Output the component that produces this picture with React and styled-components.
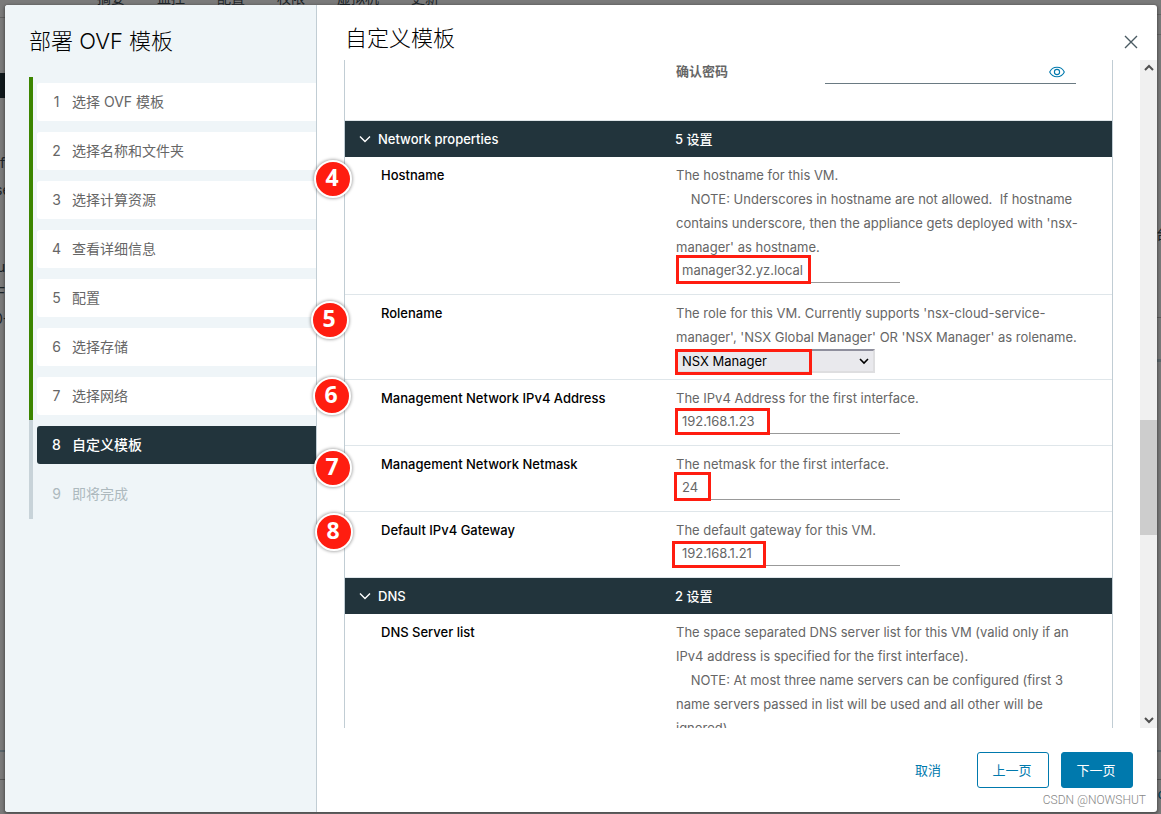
import styled, { createGlobalStyle } from "styled-components";

const GlobalStyle = createGlobalStyle`
* { box-sizing: border-box; }
body {
  margin: 0;
  background: #7a7a7a;
  font-family: Inter, "Noto Sans CJK SC", sans-serif;
  font-size: 13px;
  color: #666;
}
input, select, button { font: inherit; color: inherit; }
`

const Screen = styled.div`
position: relative;
height: 100vh;
padding: 5px 4px 2px 5px;
overflow: hidden;
`

const Backdrop = styled.div`
position: absolute;
inset: 0;
color: #1c2428;
font-size: 14px;
`

const Behind = styled.span`
position: absolute;
left: ${props => props.$right ? "auto" : props.$x + "px"};
right: ${props => props.$right ? props.$x + "px" : "auto"};
top: ${props => props.$y}px;
color: ${props => props.$color};
line-height: 18px;
white-space: pre;
`

const Mark = styled.span`
position: absolute;
top: ${props => props.$y}px;
left: ${props => props.$right ? "auto" : "0"};
right: ${props => props.$right ? "0" : "auto"};
width: 5px;
height: ${props => props.$h}px;
background: ${props => props.$color};
`

const Modal = styled.div`
position: relative;
display: flex;
height: 100%;
background: white;
border-radius: 3px;
box-shadow: 0 1px 3px 1px rgba(0, 0, 0, 0.35);
`

const Sidebar = styled.nav`
flex: none;
width: 312px;
background: #eff5f8;
border-right: 1px solid #c1cdd4;
border-radius: 3px 0 0 3px;
padding: 20px 0 0 24px;
`

const SideTitle = styled.h1`
margin: 0 0 20px;
color: black;
font-size: 22px;
font-weight: 300;
line-height: 32px;
`

const Steps = styled.ol`
list-style: none;
margin: 0;
padding: 0;
`

const Step = styled.li`
height: 49px;
padding: 6px 0 5px 4px;
border-left: 4px solid ${props => props.$done ? "#3c8500" : "#c8d3d9"};
&:last-child { height: 50px; }
`

const StepButton = styled.button`
display: flex;
align-items: center;
gap: 10px;
width: 100%;
height: 38px;
padding: 0 0 2px 14px;
border: none;
border-radius: 3px 0 0 3px;
font-size: 14px;
text-align: left;
background: ${props => props.$active ? "#22343c" : props.$future ? "transparent" : "white"};
color: ${props => props.$active ? "white" : props.$future ? "#adb9be" : "#666"};
font-weight: ${props => props.$active ? 500 : 400};
`

const StepNumber = styled.span`
width: 11px;
text-align: center;
`

const Main = styled.main`
flex: 1;
min-width: 0;
display: flex;
flex-direction: column;
`

const Header = styled.header`
display: flex;
justify-content: space-between;
height: 55px;
padding: 17px 16px 0 28px;
`

const Title = styled.h2`
margin: 0;
color: black;
font-size: 22px;
font-weight: 300;
line-height: 32px;
`

const CloseButton = styled.button`
width: 20px;
height: 20px;
margin-top: 10px;
padding: 0;
border: none;
background: none;
color: #4a5a62;
`

const Viewport = styled.div`
flex: 1;
min-height: 0;
display: flex;
align-items: stretch;
padding-left: 27px;
overflow-x: visible;
overflow-y: clip;
`

const Settings = styled.div`
flex: 1;
min-width: 0;
margin-right: 27px;
border-left: 1px solid #c1cdd4;
border-right: 1px solid #c1cdd4;
`

const PasswordRow = styled.div`
display: flex;
height: 61px;
padding-left: 331px;
border-bottom: 1px solid #dfe5e8;
`

const PasswordLabel = styled.label`
width: 149px;
line-height: 22px;
font-weight: 700;
`

const PasswordBox = styled.div`
display: flex;
align-items: center;
width: 251px;
height: 24px;
padding-right: 11px;
border-bottom: 1px solid #6a7a82;
`

const PasswordInput = styled.input`
flex: 1;
min-width: 0;
border: none;
background: none;
outline: none;
`

const EyeButton = styled.button`
width: 16px;
height: 16px;
padding: 0;
border: none;
background: none;
color: #0079ad;
`

const GroupHeader = styled.div`
display: flex;
align-items: center;
height: 36px;
background: #22343c;
color: white;
font-weight: 500;
`

const GroupToggle = styled.button`
display: flex;
align-items: center;
gap: 7px;
width: 330px;
padding: 0 0 0 14px;
border: none;
background: none;
font-weight: 500;
`

const GroupCount = styled.span`
padding-bottom: 2px;
`

const Row = styled.div`
position: relative;
display: grid;
grid-template-columns: 295px 1fr;
padding: 6px 0 6px 36px;
border-bottom: 1px solid #dfe6ea;
`

const RowLabel = styled.label`
color: black;
font-weight: 500;
line-height: 24px;
`

const Description = styled.p`
margin: 0;
line-height: 24px;
white-space: pre;
`

const Field = styled.div`
position: relative;
width: ${props => props.$width}px;
height: 24px;
margin-bottom: ${props => props.$gap}px;
`

const TextInput = styled.input`
display: block;
width: 100%;
height: 24px;
padding: 0 6px 1px;
border: none;
border-bottom: 1px solid #999;
background: none;
outline: none;
`

const Select = styled.select`
display: block;
width: 100%;
height: 24px;
padding: 0 4px;
appearance: none;
border: 2px solid #dedee0;
border-top-color: #8f8f9d;
border-radius: 0;
background: #e9e9ed;
color: black;
outline: none;
`

const SelectArrow = styled.svg`
position: absolute;
right: 6px;
top: 9px;
pointer-events: none;
`

const Highlight = styled.span`
position: absolute;
left: ${props => props.$box[0]}px;
top: ${props => props.$box[1]}px;
width: ${props => props.$box[2]}px;
height: ${props => props.$box[3]}px;
border: 3px solid #ff1d10;
pointer-events: none;
`

const Badge = styled.span`
position: absolute;
left: ${props => props.$x}px;
top: ${props => props.$y}px;
display: grid;
place-items: center;
width: 38px;
height: 38px;
padding: 0 2px 4px 0;
border: 2px solid white;
border-radius: 50%;
background: #ff1d10;
box-shadow: 0 0 3px 1px rgba(0, 0, 0, 0.3);
color: white;
font-family: "Open Sans", sans-serif;
font-size: 23px;
font-weight: 700;
line-height: 30px;
`

const ScrollTrack = styled.div`
display: flex;
flex-direction: column;
align-items: center;
flex: none;
width: 17px;
padding: 4px 0;
background: #f0f0f0;
color: #505050;
`

const ScrollThumb = styled.div`
width: 100%;
height: 115px;
margin: 348px 0 auto;
background: #cdcdcd;
`

const Footer = styled.footer`
display: flex;
justify-content: flex-end;
align-items: center;
gap: 12px;
height: 84px;
padding-right: 24px;
`

const Button = styled.button`
width: 72px;
height: 36px;
padding: 0 2px 2px 0;
border: 1px solid ${props => props.$plain ? "transparent" : "#0079ad"};
border-radius: 3px;
background: ${props => props.$primary ? "#0079ad" : "white"};
color: ${props => props.$primary ? "white" : "#0079ad"};
`

const Watermark = styled.div`
position: absolute;
right: 11px;
bottom: 4px;
color: #888;
font-family: Roboto, sans-serif;
font-size: 12px;
font-weight: 300;
line-height: 16px;
`

const steps = [
  "选择 OVF 模板",
  "选择名称和文件夹",
  "选择计算资源",
  "查看详细信息",
  "配置",
  "选择存储",
  "选择网络",
  "自定义模板",
  "即将完成",
]

const tabs = [
  { text: "摘要", x: 97 },
  { text: "监控", x: 157 },
  { text: "配置", x: 217 },
  { text: "权限", x: 277 },
  { text: "虚拟机", x: 337 },
  { text: "更新", x: 411 },
]

const fragments = [
  { text: "f", x: 0, y: 154 },
  { text: "se", x: -5, y: 181 },
  { text: "u", x: -3, y: 258 },
  { text: "F", x: -3, y: 284 },
  { text: "0-", x: -6, y: 310 },
  { text: "台", x: -9, y: 225, right: true },
  { text: "o", x: -5, y: 785, right: true, color: "#003d57" },
]

const networkRows = [
  {
    id: "hostname",
    label: "Hostname",
    text: "The hostname for this VM.\n    NOTE: Underscores in hostname are not allowed.  If hostname\ncontains underscore, then the appliance gets deployed with 'nsx-\nmanager' as hostname.",
    value: "manager32.yz.local",
    box: [0, -4, 135, 29],
    badge: { number: 4, x: -31, y: 3 },
  },
  {
    id: "rolename",
    label: "Rolename",
    text: "The role for this VM. Currently supports 'nsx-cloud-service-\nmanager', 'NSX Global Manager' OR 'NSX Manager' as rolename.",
    options: ["NSX Manager", "NSX Global Manager", "nsx-cloud-service-manager"],
    box: [-1, 0, 137, 26],
    badge: { number: 5, x: -34, y: 6 },
  },
  {
    id: "address",
    label: "Management Network IPv4 Address",
    text: "The IPv4 Address for the first interface.",
    value: "192.168.1.23",
    box: [-1, -2, 95, 27],
    badge: { number: 6, x: -32, y: -3 },
  },
  {
    id: "netmask",
    label: "Management Network Netmask",
    text: "The netmask for the first interface.",
    value: "24",
    box: [-2, -4, 37, 29],
    badge: { number: 7, x: -31, y: 3 },
  },
  {
    id: "gateway",
    label: "Default IPv4 Gateway",
    text: "The default gateway for this VM.",
    value: "192.168.1.21",
    box: [-4, -1, 94, 27],
    badge: { number: 8, x: -30, y: 1 },
  },
]

const dnsText = "The space separated DNS server list for this VM (valid only if an\nIPv4 address is specified for the first interface).\n    NOTE: At most three name servers can be configured (first 3\nname servers passed in list will be used and all other will be\nignored)."

function Chevron({ up, bold }){
  return(
    <svg width="12" height="8" viewBox="0 0 12 8" fill="none" stroke="currentColor" strokeWidth={bold ? 2 : 1.4}>
      <path d={up ? "M2 6 L6 2 L10 6" : bold ? "M2 2 L6 6 L10 2" : "M1 1.5 L6 6.5 L11 1.5"} />
    </svg>
  )
}

function Group({ title, count }){
  return(
    <GroupHeader>
      <GroupToggle type="button"><Chevron />{title}</GroupToggle>
      <GroupCount>{count} 设置</GroupCount>
    </GroupHeader>
  )
}

function SettingRow({ row }){
  return(
    <Row>
      <RowLabel htmlFor={row.id}>{row.label}</RowLabel>
      <div>
        <Description>{row.text}</Description>
        {row.options ? (
          <Field $width={199} $gap={0}>
            <Select id={row.id}>
              {row.options.map(option => <option key={option}>{option}</option>)}
            </Select>
            <SelectArrow width="10" height="7" viewBox="0 0 10 7" fill="none" stroke="black" strokeWidth="1.6">
              <path d="M1 1 L5 5 L9 1" />
            </SelectArrow>
            <Highlight $box={row.box} />
          </Field>
        ) : (
          <Field $width={224} $gap={5}>
            <TextInput id={row.id} type="text" defaultValue={row.value} />
            <Highlight $box={row.box} />
          </Field>
        )}
      </div>
      <Badge $x={row.badge.x} $y={row.badge.y}>{row.badge.number}</Badge>
    </Row>
  )
}

function App(){
  return(
    <Screen>
      <GlobalStyle />
      <Backdrop aria-hidden="true">
        {tabs.map(tab => <Behind key={tab.text} $x={tab.x} $y={-11}>{tab.text}</Behind>)}
        {fragments.map(part => (
          <Behind key={part.text} $x={part.x} $y={part.y} $right={part.right} $color={part.color}>{part.text}</Behind>
        ))}
        <Mark $y={73} $h={25} $color="#10191d" />
        <Mark $y={17} $h={1} $color="#606060" />
        <Mark $y={750} $h={2} $color="#59656b" />
        <Mark $y={779} $h={1} $color="#555" />
        <Mark $right $y={14} $h={1} $color="#666" />
        <Mark $right $y={34} $h={1} $color="#666" />
        <Mark $right $y={317} $h={1} $color="#5c5c5c" />
        <Mark $right $y={359} $h={3} $color="#5d676c" />
        <Mark $right $y={750} $h={2} $color="#59656b" />
        <Mark $right $y={779} $h={1} $color="#555" />
      </Backdrop>
      <Modal role="dialog">
        <Sidebar>
          <SideTitle>部署 OVF 模板</SideTitle>
          <Steps>
            {steps.map((step, i) => (
              <Step key={step} $done={i < 7}>
                <StepButton type="button" $active={i === 7} $future={i > 7}>
                  <StepNumber>{i + 1}</StepNumber>
                  {step}
                </StepButton>
              </Step>
            ))}
          </Steps>
        </Sidebar>
        <Main>
          <Header>
            <Title>自定义模板</Title>
            <CloseButton type="button" aria-label="关闭">
              <svg width="20" height="20" viewBox="0 0 20 20" fill="none" stroke="currentColor" strokeWidth="1.4">
                <path d="M4 4 L16 16 M16 4 L4 16" />
              </svg>
            </CloseButton>
          </Header>
          <Viewport>
            <Settings>
              <PasswordRow>
                <PasswordLabel htmlFor="confirm">确认密码</PasswordLabel>
                <PasswordBox>
                  <PasswordInput id="confirm" type="password" />
                  <EyeButton type="button" aria-label="显示密码">
                    <svg width="16" height="16" viewBox="0 0 16 16" fill="none" stroke="currentColor" strokeWidth="1.1">
                      <path d="M0.7 8 C3.5 1.6 12.5 1.6 15.3 8 C12.5 14.4 3.5 14.4 0.7 8 Z" />
                      <circle cx="8" cy="8" r="2.6" />
                    </svg>
                  </EyeButton>
                </PasswordBox>
              </PasswordRow>
              <Group title="Network properties" count={5} />
              {networkRows.map(row => <SettingRow key={row.id} row={row} />)}
              <Group title="DNS" count={2} />
              <Row>
                <RowLabel as="span">DNS Server list</RowLabel>
                <Description>{dnsText}</Description>
              </Row>
            </Settings>
            <ScrollTrack aria-hidden="true">
              <Chevron up bold />
              <ScrollThumb />
              <Chevron bold />
            </ScrollTrack>
          </Viewport>
          <Footer>
            <Button type="button" $plain>取消</Button>
            <Button type="button">上一页</Button>
            <Button type="button" $primary>下一页</Button>
          </Footer>
        </Main>
        <Watermark>CSDN @NOWSHUT</Watermark>
      </Modal>
    </Screen>
  )
}

export default App
